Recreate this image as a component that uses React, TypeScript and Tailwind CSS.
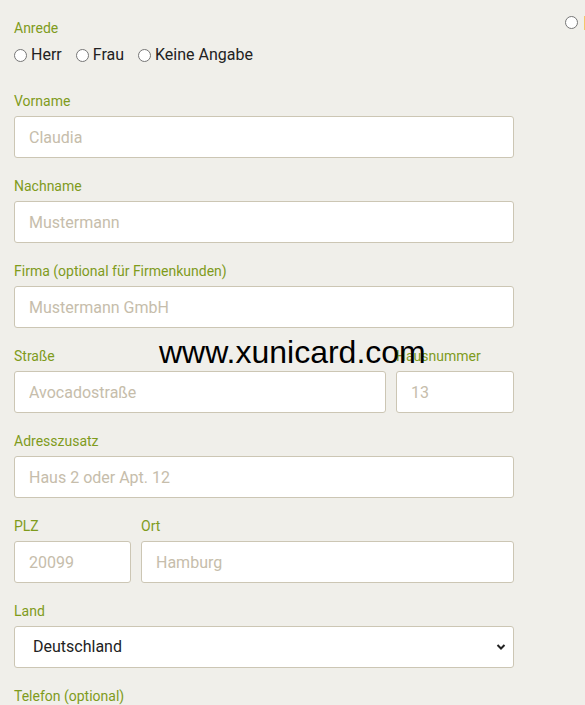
import React from 'react';

const labelCls = "block h-5 text-[14px] leading-5 text-[#7f9b1c] mb-[5px]";
const inputCls = "block w-full h-[42px] rounded-[3px] border border-[#ccc6b4] bg-white px-[14px] text-[16px] text-[#222] placeholder:text-[#c6bdab] outline-none";

const Field: React.FC<{ label: string; placeholder: string; className?: string }> = ({ label, placeholder, className }) => (
  <div className={className}>
    <label className={labelCls}>{label}</label>
    <input className={inputCls} placeholder={placeholder} />
  </div>
);

const Radio: React.FC<{ label: string }> = ({ label }) => (
  <label className="flex items-center gap-[4px] text-[16px] text-[#222]">
    <span className="inline-block w-[13px] h-[13px] rounded-full border border-[#767676] bg-white"></span>
    {label}
  </label>
);

export default function App() {
  return (
    <div className="relative w-[585px] h-[705px] overflow-hidden bg-[#f0efea]" style={{ fontFamily: 'Roboto, "Noto Sans", sans-serif' }}>
      <div className="w-[500px] ml-[14px] pt-[18px]">
        <div className="mb-[24px]">
          <label className={labelCls}>Anrede</label>
          <div className="flex items-center gap-[14px] h-[24px]">
            <Radio label="Herr" />
            <Radio label="Frau" />
            <Radio label="Keine Angabe" />
          </div>
        </div>

        <div className="flex flex-col gap-[18px]">
          <Field label="Vorname" placeholder="Claudia" />
          <Field label="Nachname" placeholder="Mustermann" />
          <Field label="Firma (optional für Firmenkunden)" placeholder="Mustermann GmbH" />
          <div className="flex gap-[10px]">
            <Field className="flex-1" label="Straße" placeholder="Avocadostraße" />
            <Field className="w-[118px]" label="Hausnummer" placeholder="13" />
          </div>
          <Field label="Adresszusatz" placeholder="Haus 2 oder Apt. 12" />
          <div className="flex gap-[10px]">
            <Field className="w-[117px]" label="PLZ" placeholder="20099" />
            <Field className="flex-1" label="Ort" placeholder="Hamburg" />
          </div>
          <div>
            <label className={labelCls}>Land</label>
            <div className="relative">
              <select className="block w-full h-[42px] appearance-none rounded-[3px] border border-[#ccc6b4] bg-white pl-[18px] text-[16px] text-[#222] outline-none">
                <option>Deutschland</option>
              </select>
              <svg className="absolute right-[8px] top-[17px]" width="10" height="8" viewBox="0 0 10 8">
                <path d="M1.5 2 L5 5.5 L8.5 2" fill="none" stroke="#222" strokeWidth="2" />
              </svg>
            </div>
          </div>
          <div>
            <label className={labelCls}>Telefon (optional)</label>
          </div>
        </div>
      </div>

      <span className="absolute left-[565px] top-[16px] w-[13px] h-[13px] rounded-full border border-[#767676] bg-white"></span>
      <span className="absolute left-[584px] top-[16px] w-[4px] h-[14px] bg-[#f5c66a]"></span>

      <div className="absolute left-[159px] top-[332px] text-[32px] leading-[40px] text-black" style={{ fontFamily: '"Liberation Sans", Arial, sans-serif' }}>
        www.xunicard.com
      </div>
    </div>
  );
}
